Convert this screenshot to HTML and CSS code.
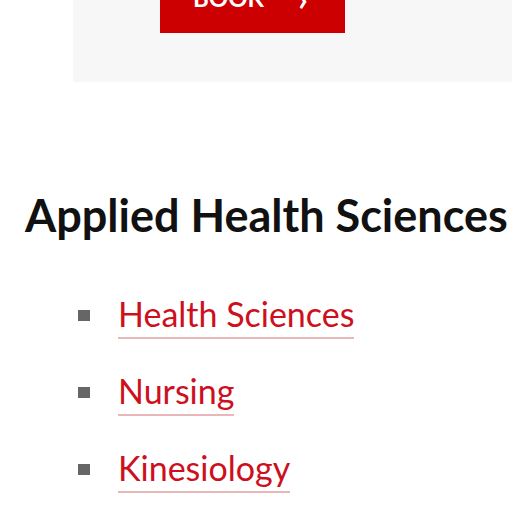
FILE: index.html
```html
<!DOCTYPE html>
<html>
<head>
<meta charset="utf-8">
<link rel="stylesheet" href="styles.css">
</head>
<body>
<div class="card">
  <a class="btn" href="#"><span class="btn-label">BOOK</span><span class="btn-arrow">›</span></a>
</div>
<h2 class="title">Applied Health Sciences</h2>
<ul class="links">
  <li><a href="#">Health Sciences</a></li>
  <li><a href="#">Nursing</a></li>
  <li><a href="#">Kinesiology</a></li>
</ul>
</body>
</html>
```
FILE: styles.css
```css
html, body { margin: 0; padding: 0; background: #fff; }
body { font-family: Lato, "Open Sans", sans-serif; width: 512px; height: 512px; overflow: hidden; }
.card {
  margin-left: 73px;
  margin-top: -38px;
  height: 120px;
  background: #f7f7f7;
  padding-left: 87px;
  box-sizing: border-box;
}
.btn {
  display: flex;
  align-items: center;
  gap: 34px;
  width: 185px;
  height: 71px;
  padding-left: 33px;
  box-sizing: border-box;
  background: #cc0000;
  color: #fff;
  text-decoration: none;
  font-size: 24px;
  font-weight: 700;
}
.btn-arrow { font-size: 34px; font-weight: 700; }
.title {
  margin: 109px 0 0 25px;
  font-size: 45px;
  font-weight: 700;
  color: #111;
  line-height: 48px;
  white-space: nowrap;
}
.links {
  list-style: none;
  margin: 55px 0 0 0;
  padding: 0 0 0 78px;
  display: flex;
  flex-direction: column;
  gap: 32px;
}
.links li {
  display: flex;
  align-items: flex-start;
  gap: 28px;
  height: 45px;
}
.links li::before {
  content: "";
  width: 12px;
  height: 11px;
  background: #666;
  flex: none;
  margin-top: 16px;
}
.links a {
  display: inline-block;
  color: #cc1020;
  text-decoration: none;
  font-size: 34px;
  line-height: 40px;
  padding-bottom: 3px;
  border-bottom: 2px solid #e8b8b8;
}
```
